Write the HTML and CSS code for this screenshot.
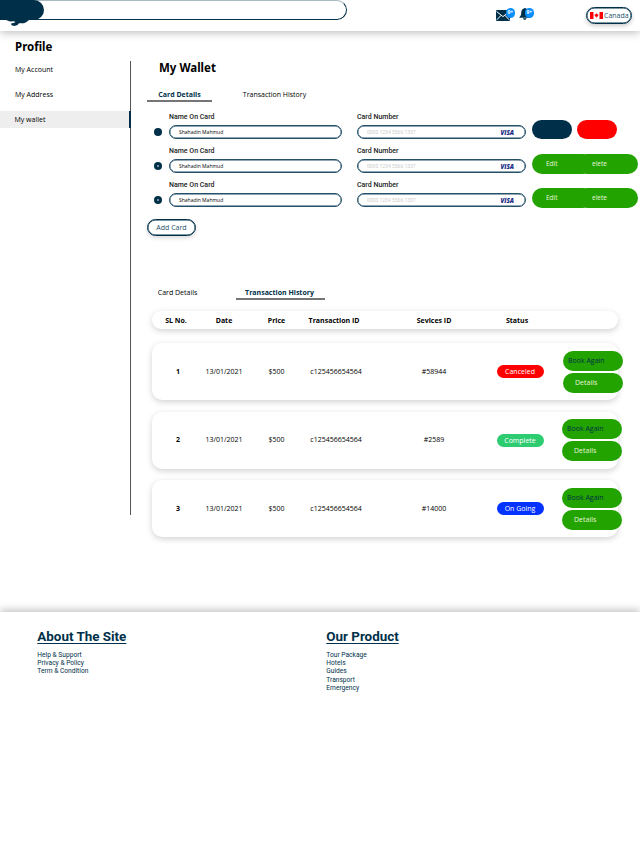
FILE: index.html
```html
<!DOCTYPE html>
<html lang="en">
<head>
<meta charset="utf-8">
<title>My Wallet</title>
<link rel="stylesheet" href="styles.css">
</head>
<body>
<header class="topbar">
  <div class="search"><div class="search-btn"></div></div>
  <svg class="logo" width="24" height="7" viewBox="0 0 24 7"><path d="M0 0H23L20.500 2L18 3.200H13L11.500 5L8.500 6L5.500 5.200L5 3.500L7.500 3L9.500 2L8 1.300L4 1.600Z" fill="#003049"/></svg>
  <div class="notices">
    <div class="notice mail">
      <svg width="14" height="11" viewBox="0 0 14 11"><rect width="14" height="11" rx="1" fill="#003049"/><path d="M.6 1.600L7 6.600L13.400 1.600M.8 9.800L5 5.400M13.200 9.800L9 5.400" fill="none" stroke="#fff" stroke-width="1"/></svg>
      <span class="count">9+</span>
    </div>
    <div class="notice bell">
      <svg width="12" height="12" viewBox="0 0 12 12"><path d="M6 0C3.200.6 2.200 2.500 2.200 5C2.200 7.500 1.300 8 .2 9.700H11.800C10.500 8 9.800 7.500 9.800 5C9.800 2.500 8.800.6 6 0ZM4 10.300H7.500C7.300 12.300 4.200 12.300 4 10.300Z" fill="#003049"/></svg>
      <span class="count">9+</span>
    </div>
  </div>
  <div class="country">
    <svg width="13" height="7" viewBox="0 0 13 7"><path d="M0 0H3.500V7H0ZM9.500 0H13V7H9.500ZM6.500 1L7.200 2.300L8.500 2.500L7.900 4.500L6.700 4.700V6H6.300V4.700L5.100 4.500L4.500 2.500L5.800 2.300Z" fill="#f00"/></svg>
    <span>Canada</span>
  </div>
</header>
<div class="page">
  <aside class="side">
    <h2>Profile</h2>
    <nav class="side-nav">
      <a>My Account</a>
      <a>My Address</a>
      <a class="current">My wallet</a>
    </nav>
  </aside>
  <main class="main">
    <h1>My Wallet</h1>
    <div class="tabs">
      <div class="tab first active">Card Details</div>
      <div class="tab second">Transaction History</div>
    </div>
    <section class="cards">
      <div class="card">
        <i class="radio"></i>
        <label class="field name"><b>Name On Card</b><span class="input">Shahadin Mahmud</span></label>
        <label class="field number"><b>Card Number</b><span class="input"><em>0000 1234 5566 1337</em><strong>VISA</strong></span></label>
        <div class="actions"><span class="btn navy"></span><span class="btn red"></span></div>
      </div>
      <div class="card">
        <i class="radio dot"></i>
        <label class="field name"><b>Name On Card</b><span class="input">Shahadin Mahmud</span></label>
        <label class="field number"><b>Card Number</b><span class="input"><em>0000 1234 5566 1337</em><strong>VISA</strong></span></label>
        <div class="actions joined"><span>Edit</span><span>elete</span></div>
      </div>
      <div class="card">
        <i class="radio dot"></i>
        <label class="field name"><b>Name On Card</b><span class="input">Shahadin Mahmud</span></label>
        <label class="field number"><b>Card Number</b><span class="input"><em>0000 1234 5566 1337</em><strong>VISA</strong></span></label>
        <div class="actions joined"><span>Edit</span><span>elete</span></div>
      </div>
    </section>
    <div class="add">Add Card</div>
    <div class="tabs lower">
      <div class="tab first">Card Details</div>
      <div class="tab second active">Transaction History</div>
    </div>
    <section class="history">
      <div class="head"><span>SL No.</span><span>Date</span><span>Price</span><span>Transaction ID</span><span>Sevices ID</span><span>Status</span></div>
      <div class="row wide">
        <b>1</b><span>13/01/2021</span><span>$500</span><span>c125456654564</span><span>#58944</span><span class="status canceled">Canceled</span>
        <div class="ops"><span class="again">Book Again</span><span>Details</span></div>
      </div>
      <div class="row">
        <b>2</b><span>13/01/2021</span><span>$500</span><span>c125456654564</span><span>#2589</span><span class="status complete">Complete</span>
        <div class="ops"><span class="again">Book Again</span><span>Details</span></div>
      </div>
      <div class="row">
        <b>3</b><span>13/01/2021</span><span>$500</span><span>c125456654564</span><span>#14000</span><span class="status ongoing">On Going</span>
        <div class="ops"><span class="again">Book Again</span><span>Details</span></div>
      </div>
    </section>
  </main>
</div>
<footer class="footer">
  <div><h3>About The Site</h3><p>Help &amp; Support</p><p>Privacy &amp; Policy</p><p>Term &amp; Condition</p></div>
  <div><h3>Our Product</h3><p>Tour Package</p><p>Hotels</p><p>Guides</p><p>Transport</p><p>Emergency</p></div>
</footer>
</body>
</html>
```
FILE: styles.css
```css
* { box-sizing: border-box; }
body { margin: 0; width: 640px; height: 851px; overflow: hidden; background: #fff; color: #000; font: 7px/10px "Open Sans", "Noto Sans", sans-serif; white-space: nowrap; }
h1, h2, h3, p { margin: 0; }

.topbar { position: relative; height: 31px; display: flex; background: #fff; box-shadow: 0 2px 8px rgba(0,0,0,.25); }
.search { width: 346.500px; height: 20px; border: 1px solid #003049; border-left: 0; border-top-color: #a9bac3; border-radius: 0 10px 10px 0; }
.search-btn { width: 44px; height: 20px; margin-top: -1px; background: #003049; border-radius: 0 10px 10px 0; }
.logo { position: absolute; left: 6px; top: 20px; }
.notices { display: flex; margin-left: 149px; padding-top: 8px; }
.notice { position: relative; width: 23px; height: 14px; }
.mail svg { margin-top: 2px; }
.count { position: absolute; top: 0; left: 10px; width: 9.500px; height: 9.500px; border-radius: 50%; background: #0a8fff; color: #fff; font-size: 5px; font-weight: 700; line-height: 9px; text-align: center; }
.bell .count { left: 6px; }
.country { margin: 7px 0 0 44.500px; width: 46px; height: 17px; border: 1px solid #003049; border-radius: 9px; display: flex; align-items: center; gap: 1px; padding-left: 3px; color: #24506a; box-shadow: inset 0 0 0 .5px #003049, 0 2px 4px rgba(0,0,0,.2); }

.page { display: flex; height: 581px; }
.side { width: 132px; padding-top: 8px; }
.side h2 { font: 700 11.500px/16px "Noto Sans", sans-serif; padding-left: 15px; }
.side-nav { height: 454px; margin-top: 6px; border-right: 1px solid #555; width: 131px; }
.side-nav a { display: block; height: 17px; line-height: 17px; padding-left: 15px; margin-bottom: 8px; }
.side-nav a.current { background: #eee; border-right: 2px solid #003049; margin-right: -1px; padding-left: 14.500px; }
.main { padding: 29px 0 0 15px; width: 508px; }
h1 { font: 700 11.500px/16px "Noto Sans", sans-serif; padding-left: 12px; }
.tabs { display: flex; height: 14px; margin-top: 12px; }
.tab { height: 14px; line-height: 14px; text-align: center; }
.tab.first { width: 65px; margin-right: 24px; }
.tab.second { width: 77px; }
.tab.active { color: #003049; font-weight: 700; border-bottom: 2px solid #757575; }
.cards { margin-top: 9px; }
.card { display: flex; height: 34px; }
.radio { width: 8px; height: 8px; border-radius: 50%; background: #003049; margin: 17px 7px 0; display: flex; align-items: center; justify-content: center; }
.radio.dot::after { content: ""; width: 2px; height: 2px; border-radius: 50%; background: #9fb1bc; }
.field b { display: block; color: #222; font: 500 7px/8px Roboto, sans-serif; margin: 2px 0 4px; }
.field.name { width: 173px; margin-right: 15px; }
.field.number { width: 169px; margin-right: 6px; }
.input { display: flex; justify-content: space-between; align-items: center; height: 14px; padding: 0 11px 0 9px; border: 1px solid #24506a; box-shadow: inset 0 0 0 .4px #24506a; border-radius: 7px; font-size: 5px; }
.input em { font: 5px Roboto, sans-serif; color: #ccc; }
.input strong { color: #1a2c85; font: italic 800 6.200px "Open Sans", sans-serif; }
.actions { display: flex; height: 20px; margin-top: 9px; }
.btn { width: 40px; height: 19px; border-radius: 10px; margin-right: 5.400px; }
.navy { background: #003049; }
.red { background: #f00; }
.joined span { width: 61px; height: 20px; border-radius: 10px; background: #23a300; color: #e5f6df; line-height: 19px; font-size: 6.500px; padding-left: 14px; }
.joined span + span { margin-left: -16px; padding-left: 15px; }
.add { width: 49px; height: 17px; margin-top: 6px; border: 1px solid #003049; border-radius: 9px; line-height: 15px; text-align: center; color: #24506a; box-shadow: inset 0 0 0 .5px #003049, 0 2px 4px rgba(0,0,0,.15); }
.tabs.lower { margin-top: 50px; }
.lower .first { width: 61px; margin-right: 28px; }
.lower .second { width: 89px; padding-right: 2px; }

.history { width: 466px; margin: 11px 0 0 5px; }
.head, .row { display: grid; align-items: center; justify-items: center; background: #fff; box-shadow: 0 2px 6px rgba(0,0,0,.18); }
.head { grid-template-columns: 48px 48px 57px 58px 142px 24px; height: 18px; border-radius: 9px; font-weight: 700; margin-bottom: 14px; padding-top: 1px; }
.head span { display: flex; justify-content: center; width: 0; }
.row { grid-template-columns: 52px 40px 65px 54px 142px 30px 62px; height: 57px; border-radius: 10px; margin-bottom: 11.500px; }
.status { width: 47px; height: 13px; border-radius: 7px; color: #fff; text-align: center; line-height: 13px; }
.canceled { background: #f00; }
.complete { background: #2ecc71; }
.ongoing { background: #0432ff; }
.ops { justify-self: start; display: flex; flex-direction: column; gap: 2px; width: 60.500px; margin-left: 26.500px; }
.wide .ops { margin-left: 27.500px; }
.ops span { height: 20px; border-radius: 10px; background: #23a300; color: #e5f6df; line-height: 20px; padding-left: 12.500px; }
.ops .again { color: #003049; padding-left: 5.500px; }

.footer { display: flex; height: 239px; padding: 16px 0 0 37.300px; color: #003049; background: #fff; box-shadow: 0 -2px 8px rgba(0,0,0,.25); font: 6.650px/8.200px Roboto, sans-serif; }
.footer div { width: 289px; }
.footer h3 { font-size: 13.400px; line-height: 17px; font-weight: 700; text-decoration: underline; text-underline-offset: 2px; text-decoration-thickness: 1px; margin-bottom: 6px; }
```
